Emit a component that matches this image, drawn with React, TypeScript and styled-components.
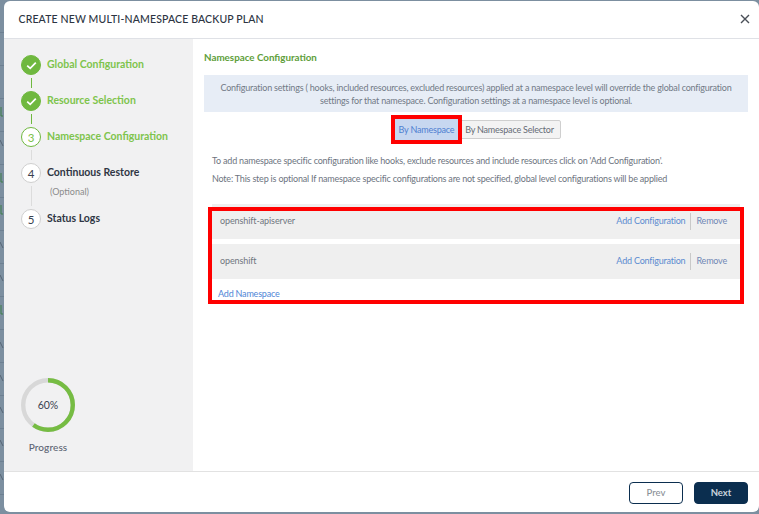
import React from "react";
import styled, { createGlobalStyle } from "styled-components";

const Global = createGlobalStyle`
  html, body { margin: 0; padding: 0; width: 759px; height: 514px; overflow: hidden; background: #7c8fa0; }
  * { box-sizing: border-box; }
  body { font-family: Lato, "Liberation Sans", sans-serif; }
`;

const Backdrop = styled.div`
  position: relative;
  width: 759px;
  height: 514px;
  padding: 1px 0 2px 4px;
  background: repeating-linear-gradient(180deg, #7c8fa0 0, #7c8fa0 32px, #6d8092 32px, #6d8092 33px);
`;
const BackdropMarks = styled.svg`
  position: absolute;
  left: 0;
  top: 0;
`;
const Modal = styled.div`
  position: relative;
  width: 755px;
  height: 511px;
  background: #fff;
  border-radius: 6px;
  display: flex;
  flex-direction: column;
  overflow: hidden;
`;
const Header = styled.header`
  height: 38px;
  flex: none;
  display: flex;
  align-items: center;
  justify-content: space-between;
  padding: 0 9px 2px 14.5px;
  border-bottom: 1px solid #dfe1e6;
`;
const Title = styled.h1`
  margin: 0;
  font-size: 10.5px;
  font-weight: 500;
  color: #2c3442;
  letter-spacing: 0.14px;
`;
const Close = styled.button`
  width: 10px;
  height: 10px;
  padding: 0;
  border: 0;
  background: none;
  display: flex;
`;
const Body = styled.div`
  flex: 1;
  display: flex;
  min-height: 0;
`;
const Side = styled.aside`
  width: 189px;
  flex: none;
  background: #f1f1f2;
  padding: 16px 0 0 17px;
  display: flex;
  flex-direction: column;
`;
const Step = styled.div`
  display: flex;
  align-items: center;
  gap: 6px;
  height: 20px;
`;
const Circle = styled.span<{ $kind: "done" | "active" | "todo" }>`
  width: 20px;
  height: 20px;
  flex: none;
  border-radius: 50%;
  display: flex;
  align-items: center;
  justify-content: center;
  font-size: 11.5px;
  background: ${(p) => (p.$kind === "done" ? "#6fb83f" : "#fff")};
  border: 1px solid ${(p) => (p.$kind === "todo" ? "#cfcfcf" : "#6fb83f")};
  color: ${(p) => (p.$kind === "active" ? "#7cc24a" : "#3a4150")};
`;
const StepLabel = styled.span<{ $green?: boolean }>`
  font-size: 10.5px;
  font-weight: 700;
  position: relative;
  top: -1px;
  color: ${(p) => (p.$green ? "#7ec44c" : "#2f3644")};
`;
const Connector = styled.div<{ $green?: boolean }>`
  width: 1px;
  height: 10px;
  margin: 3px 0 3px 10px;
  background: ${(p) => (p.$green ? "#6fb83f" : "#dcdcdc")};
`;
const LongConnector = styled.div`
  position: relative;
  width: 1px;
  height: 20px;
  margin: 3px 0 3px 10px;
  background: #dcdcdc;
`;
const Optional = styled.span`
  position: absolute;
  left: 19px;
  top: 1px;
  white-space: nowrap;
  font-size: 9px;
  color: #8b8b8b;
  line-height: 10px;
`;
const ProgressBox = styled.div`
  margin-top: auto;
  margin-bottom: 18px;
  width: 54px;
  display: flex;
  flex-direction: column;
  align-items: center;
  gap: 9px;
`;
const Ring = styled.div`
  width: 54px;
  height: 54px;
  position: relative;
  display: flex;
  align-items: center;
  justify-content: center;
  font-size: 10.5px;
  color: #3a4150;
`;
const RingSvg = styled.svg`
  position: absolute;
  inset: 0;
`;
const ProgressLabel = styled.div`
  font-size: 10px;
  font-weight: 500;
  color: #5c6472;
  letter-spacing: 0.1px;
`;
const Main = styled.main`
  flex: 1;
  padding: 12px 11px 0 11px;
  min-width: 0;
`;
const SectionTitle = styled.h2`
  margin: 0 0 12px;
  font-size: 9.8px;
  line-height: 12px;
  font-weight: 700;
  color: #5e9e3a;
`;
const InfoBox = styled.div`
  background: #e7edf6;
  height: 37px;
  padding: 6px 8px 0;
  font-size: 9px;
  letter-spacing: -0.2px;
  line-height: 13px;
  text-align: center;
  color: #727a86;
`;
const Tabs = styled.div`
  display: flex;
  align-items: center;
  justify-content: center;
  margin-top: 7px;
  padding-left: 4px;
`;
const Tab = styled.button<{ $active?: boolean }>`
  position: relative;
  z-index: ${(p) => (p.$active ? 1 : 0)};
  width: ${(p) => (p.$active ? 63 : 103)}px;
  height: ${(p) => (p.$active ? 21 : 19)}px;
  font: inherit;
  font-size: 9px;
  letter-spacing: -0.2px;
  padding: 0;
  border-radius: ${(p) => (p.$active ? 0 : "2px")};
  outline: ${(p) => (p.$active ? "4px solid #ff0000" : "none")};
  background: ${(p) => (p.$active ? "#c7d7f0" : "#f3f3f3")};
  color: ${(p) => (p.$active ? "#4f7fd0" : "#666c76")};
  border: 1px solid ${(p) => (p.$active ? "#c7d7f0" : "#cfcfcf")};
`;
const Hints = styled.div`
  margin-top: 12px;
`;
const Hint = styled.p`
  margin: 0 0 0 8px;
  font-size: 9px;
  letter-spacing: -0.2px;
  line-height: 18px;
  color: #6d7480;
`;
const List = styled.div`
  position: relative;
  margin: 16px 8px 0;
  height: 96px;
  display: flex;
  flex-direction: column;
  gap: 5px;
`;
const ListHighlight = styled.div`
  position: absolute;
  inset: 3px -4px -4px;
  border: 4px solid #ff0000;
  pointer-events: none;
`;
const Row = styled.div`
  height: 35px;
  flex: none;
  background: #efefef;
  display: flex;
  align-items: center;
  justify-content: space-between;
  padding: 0 13px 1px 8px;
`;
const NsName = styled.span`
  font-size: 9px;
  letter-spacing: -0.1px;
  line-height: 16px;
  color: #6f7680;
`;
const Actions = styled.div`
  display: flex;
  align-items: center;
`;
const LinkText = styled.a<{ $muted?: boolean }>`
  font-size: 9px;
  letter-spacing: -0.2px;
  line-height: 16px;
  color: ${(p) => (p.$muted ? "#6f88b5" : "#5b8bd0")};
`;
const Divider = styled.span`
  width: 1px;
  height: 17px;
  margin: 0 5px;
  background: #c9c9c9;
`;
const AddNs = styled.a`
  margin: 4px 0 0 6px;
  font-size: 9px;
  letter-spacing: -0.2px;
  line-height: 12px;
  color: #4f86d6;
`;
const Footer = styled.footer`
  height: 41px;
  flex: none;
  border-top: 1px solid #e2e2e2;
  display: flex;
  align-items: center;
  justify-content: flex-end;
  gap: 11px;
  padding: 1px 11px 0 0;
`;
const Button = styled.button<{ $primary?: boolean }>`
  width: 54px;
  height: 22px;
  border-radius: 4px;
  font: inherit;
  font-size: 9.5px;
  font-weight: ${(p) => (p.$primary ? 700 : 500)};
  border: 1px solid #0b2e4f;
  background: ${(p) => (p.$primary ? "#0b2e4f" : "#fff")};
  color: ${(p) => (p.$primary ? "#c9d3dc" : "#8a9097")};
`;

const Check = () => (
  <svg width="11" height="9" viewBox="0 0 11 9" fill="none">
    <path d="M1.2 4.6 4.2 7.4 9.8 1.6" stroke="#fff" strokeWidth="1.7" />
  </svg>
);

const Namespace = ({ name }: { name: string }) => (
  <Row>
    <NsName>{name}</NsName>
    <Actions>
      <LinkText>Add Configuration</LinkText>
      <Divider />
      <LinkText $muted>Remove</LinkText>
    </Actions>
  </Row>
);

const greenMarks = [112, 178, 210, 310];
const greyMarks = [143, 245, 278, 345, 378, 410, 443, 477];

export default function App() {
  return (
    <>
      <Global />
      <Backdrop>
        <BackdropMarks width="4" height="514" viewBox="0 0 4 514" fill="none">
          {greenMarks.map((y) => (
            <path key={y} d={`M1 ${y - 5}V${y + 4}H3`} stroke="#3f7f4a" strokeWidth="1" />
          ))}
          {greyMarks.map((y) => (
            <path key={y} d={`M0 ${y - 3}L3 ${y + 3}`} stroke="#566676" strokeWidth="1" />
          ))}
        </BackdropMarks>
        <Modal>
          <Header>
            <Title>CREATE NEW MULTI-NAMESPACE BACKUP PLAN</Title>
            <Close aria-label="Close">
              <svg width="10" height="10" viewBox="0 0 10 10" fill="none">
                <path d="M1 1 9 9M9 1 1 9" stroke="#4a4f57" strokeWidth="1.4" />
              </svg>
            </Close>
          </Header>
          <Body>
            <Side>
              <Step>
                <Circle $kind="done"><Check /></Circle>
                <StepLabel $green>Global Configuration</StepLabel>
              </Step>
              <Connector $green />
              <Step>
                <Circle $kind="done"><Check /></Circle>
                <StepLabel $green>Resource Selection</StepLabel>
              </Step>
              <Connector $green />
              <Step>
                <Circle $kind="active">3</Circle>
                <StepLabel $green>Namespace Configuration</StepLabel>
              </Step>
              <Connector />
              <Step>
                <Circle $kind="todo">4</Circle>
                <StepLabel>Continuous Restore</StepLabel>
              </Step>
              <LongConnector>
                <Optional>(Optional)</Optional>
              </LongConnector>
              <Step>
                <Circle $kind="todo">5</Circle>
                <StepLabel>Status Logs</StepLabel>
              </Step>
              <ProgressBox>
                <Ring>
                  <RingSvg width="54" height="54" viewBox="0 0 54 54">
                    <circle cx="27" cy="27" r="24.8" fill="none" stroke="#d8d8d8" strokeWidth="4.4" />
                    <circle
                      cx="27"
                      cy="27"
                      r="24.8"
                      fill="none"
                      stroke="#76bc43"
                      strokeWidth="4.4"
                      pathLength={100}
                      strokeDasharray="60 40"
                      transform="rotate(-90 27 27)"
                    />
                  </RingSvg>
                  60%
                </Ring>
                <ProgressLabel>Progress</ProgressLabel>
              </ProgressBox>
            </Side>
            <Main>
              <SectionTitle>Namespace Configuration</SectionTitle>
              <InfoBox>
                Configuration settings ( hooks, included resources, excluded resources) applied at a namespace level will override the global configuration settings for that namespace. Configuration settings at a namespace level is optional.
              </InfoBox>
              <Tabs>
                <Tab $active>By Namespace</Tab>
                <Tab>By Namespace Selector</Tab>
              </Tabs>
              <Hints>
                <Hint>To add namespace specific configuration like hooks, exclude resources and include resources click on 'Add Configuration'.</Hint>
                <Hint>Note: This step is optional If namespace specific configurations are not specified, global level configurations will be applied</Hint>
              </Hints>
              <List>
                <Namespace name="openshift-apiserver" />
                <Namespace name="openshift" />
                <AddNs>Add Namespace</AddNs>
                <ListHighlight />
              </List>
            </Main>
          </Body>
          <Footer>
            <Button>Prev</Button>
            <Button $primary>Next</Button>
          </Footer>
        </Modal>
      </Backdrop>
    </>
  );
}
